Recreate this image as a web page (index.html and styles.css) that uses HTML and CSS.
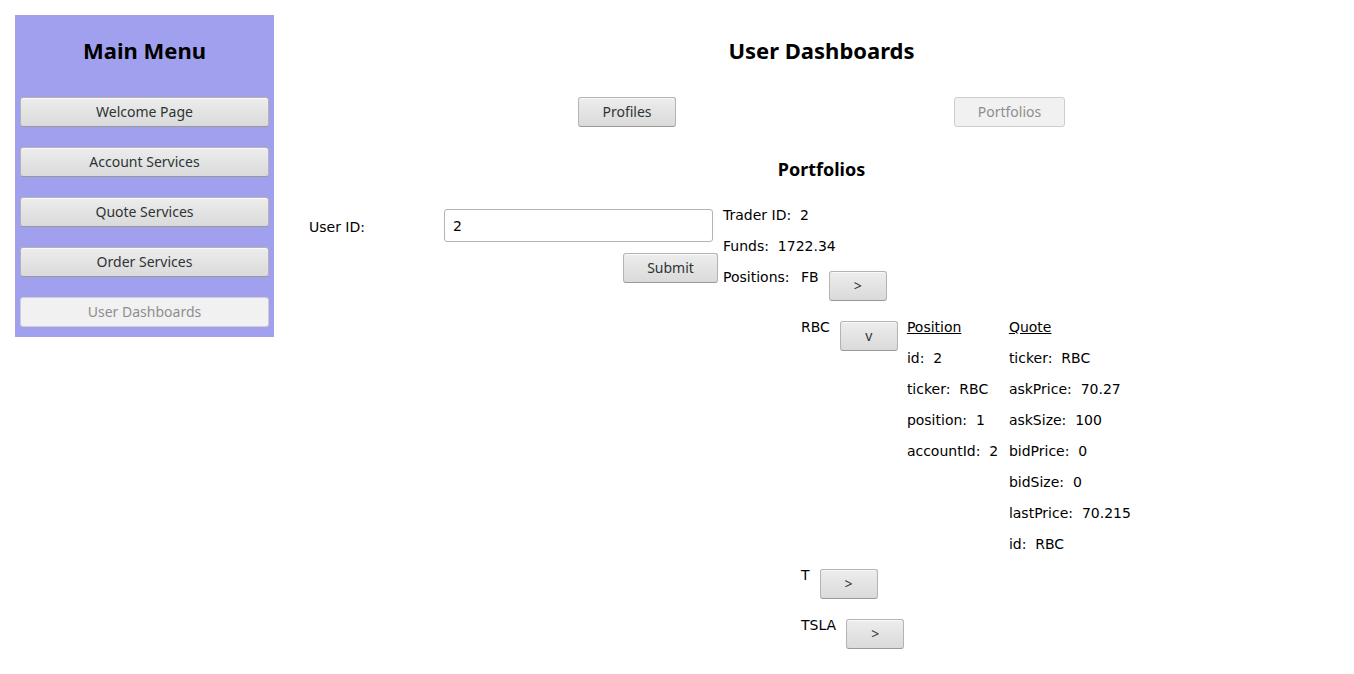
FILE: index.html
```html
<!DOCTYPE html>
<html>
<head>
	<title>User Dashboards</title>
	<meta charset="UTF-8">
	<link rel="stylesheet" href="styles.css">
</head>
<body>
	<nav class="sidebar">
		<h1 class="menu-title">Main Menu</h1>
		<button class="btn menu-btn">Welcome Page</button>
		<button class="btn menu-btn">Account Services</button>
		<button class="btn menu-btn">Quote Services</button>
		<button class="btn menu-btn">Order Services</button>
		<button class="btn menu-btn" disabled>User Dashboards</button>
	</nav>
	<main class="main">
		<h1 class="page-title">User Dashboards</h1>
		<div class="tabs">
			<button class="btn tab-btn">Profiles</button>
			<button class="btn tab-btn" disabled>Portfolios</button>
		</div>
		<h2 class="section-title">Portfolios</h2>
		<div class="portfolio">
			<form class="lookup" onsubmit="return false">
				<div class="field">
					<label for="userId">User ID:</label>
					<input id="userId" type="text" value="2">
				</div>
				<button class="btn submit-btn">Submit</button>
			</form>
			<div class="details">
				<div class="line">Trader ID:  2</div>
				<div class="line">Funds:  1722.34</div>
				<div class="positions">
					<div class="line positions-label">Positions:  </div>
					<div class="position-list">
						<div class="position">
							<span class="line ticker">FB</span>
							<button class="btn toggle-btn">&gt;</button>
						</div>
						<div class="position">
							<span class="line ticker">RBC</span>
							<button class="btn toggle-btn">v</button>
							<div class="info-col">
								<div class="line head">Position</div>
								<div class="line">id:  2</div>
								<div class="line">ticker:  RBC</div>
								<div class="line">position:  1</div>
								<div class="line">accountId:  2</div>
							</div>
							<div class="info-col">
								<div class="line head">Quote</div>
								<div class="line">ticker:  RBC</div>
								<div class="line">askPrice:  70.27</div>
								<div class="line">askSize:  100</div>
								<div class="line">bidPrice:  0</div>
								<div class="line">bidSize:  0</div>
								<div class="line">lastPrice:  70.215</div>
								<div class="line">id:  RBC</div>
							</div>
						</div>
						<div class="position">
							<span class="line ticker">T</span>
							<button class="btn toggle-btn">&gt;</button>
						</div>
						<div class="position">
							<span class="line ticker">TSLA</span>
							<button class="btn toggle-btn">&gt;</button>
						</div>
					</div>
				</div>
			</div>
		</div>
	</main>
</body>
</html>
```

FILE: styles.css
```css
body {
	margin: 15px 0 15px 15px;
	display: flex;
	align-items: flex-start;
	background-color: #fff;
	color: #000;
	font-family: "DejaVu Sans", sans-serif;
	font-size: 14px;
}

h1, h2 {
	font-family: "Noto Sans", "DejaVu Sans", sans-serif;
	font-weight: bold;
	margin: 0;
	text-align: center;
}

.sidebar {
	width: 259px;
	flex: none;
	box-sizing: border-box;
	padding: 0 5px 10px;
	background-color: #a0a0ee;
	display: flex;
	flex-direction: column;
}

.menu-title {
	font-size: 22px;
	line-height: 30px;
	margin: 20px 0 32px;
}

.btn {
	font-family: "Noto Sans", "DejaVu Sans", sans-serif;
	font-size: 14px;
	color: #2e3436;
	height: 30px;
	padding: 0 10px 2px;
	border: 1px solid #b3b3b3;
	border-bottom-color: #999;
	border-radius: 3px;
	background: linear-gradient(#ededed, #dadada);
	box-shadow: inset 0 1px #fafafa;
	cursor: pointer;
}

.btn:disabled {
	color: #8e8e8e;
	background: #f1f1f1;
	border-color: #cdcdcd;
	box-shadow: none;
	cursor: default;
}

.menu-btn {
	width: 100%;
	margin-bottom: 20px;
}

.menu-btn:last-child {
	margin-bottom: 0;
}

.main {
	flex: 1;
	margin-left: 15px;
}

.page-title {
	font-size: 22px;
	line-height: 30px;
	margin: 20px 0 32px;
}

.tabs {
	display: flex;
	justify-content: center;
	gap: 278px;
}

.tab-btn {
	width: 98px;
}

.tab-btn:disabled {
	width: 111px;
}

.section-title {
	font-size: 18px;
	line-height: 24px;
	margin: 30px 0 19px;
}

.portfolio {
	display: flex;
	padding-left: 20px;
}

.lookup {
	width: 409px;
	display: flex;
	flex-direction: column;
	margin-right: 5px;
}

.field {
	display: flex;
	align-items: center;
	margin-top: 9px;
}

.field label {
	width: 135px;
	padding-top: 3px;
}

.field input {
	width: 269px;
	height: 33px;
	box-sizing: border-box;
	border: 1px solid #b3b3b3;
	border-radius: 3px;
	padding: 0 8px;
	font-family: "DejaVu Sans", sans-serif;
	font-size: 14px;
	color: #000;
}

.submit-btn {
	align-self: flex-end;
	width: 95px;
	margin-top: 11px;
}

.line {
	line-height: 31px;
	white-space: pre;
}

.positions {
	display: flex;
	align-items: flex-start;
}

.positions-label {
	width: 78px;
}

.position {
	display: flex;
	align-items: flex-start;
}

.toggle-btn {
	width: 58px;
	margin: 9px 9px 11px 10px;
}

.info-col {
	margin-right: 10px;
}

.info-col:first-of-type {
	width: 92px;
}

.head {
	text-decoration: underline;
}
```
